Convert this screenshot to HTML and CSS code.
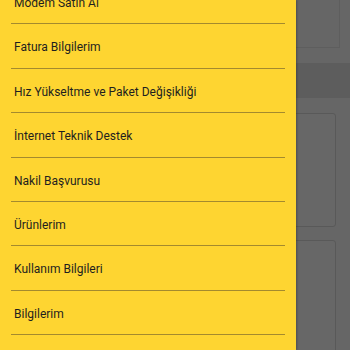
FILE: index.html
```html
<!DOCTYPE html>
<html lang="tr">
<head>
<meta charset="utf-8">
<link rel="stylesheet" href="styles.css">
</head>
<body>
<div class="page">
  <div class="top-card"></div>
  <div class="band"></div>
  <div class="card card-1"></div>
  <div class="card card-2"></div>
</div>
<nav class="drawer">
  <ul class="menu">
    <li class="item">Modem Satın Al</li>
    <li class="item">Fatura Bilgilerim</li>
    <li class="item">Hız Yükseltme ve Paket Değişikliği</li>
    <li class="item">İnternet Teknik Destek</li>
    <li class="item">Nakil Başvurusu</li>
    <li class="item">Ürünlerim</li>
    <li class="item">Kullanım Bilgileri</li>
    <li class="item">Bilgilerim</li>
  </ul>
</nav>
</body>
</html>
```
FILE: styles.css
```css
html, body {
  margin: 0;
  padding: 0;
  width: 350px;
  height: 350px;
  overflow: hidden;
  background: #666666;
  font-family: Roboto, "Noto Sans", sans-serif;
}
.page {
  display: flex;
  flex-direction: column;
  padding: 0 14px 0 0;
}
.top-card {
  height: 47px;
  margin-right: -4px;
  border-right: 1px solid #5e5e5e;
  border-bottom: 1px solid #5e5e5e;
}
.band {
  height: 35px;
  margin: 15px -14px 0 0;
  background: #5d5d5d;
}
.card {
  border: 1px solid #595959;
  border-radius: 3px;
  background: #676767;
}
.card-1 {
  height: 112px;
  margin-top: 15px;
}
.card-2 {
  height: 120px;
  margin-top: 13px;
}
.drawer {
  position: absolute;
  left: 0;
  top: 0;
  width: 296px;
  height: 350px;
  background: #fed531;
  box-shadow: 1px 0 2px rgba(0,0,0,0.25);
  overflow: hidden;
}
.menu {
  list-style: none;
  margin: -20px 0 0 0;
  padding: 0 11px;
}
.item {
  height: 40.4px;
  line-height: 40.4px;
  padding: 3px 0 0 3px;
  font-size: 12px;
  color: #1f1f1f;
  border-bottom: 1px solid #a48a2e;
  white-space: nowrap;
}
```
